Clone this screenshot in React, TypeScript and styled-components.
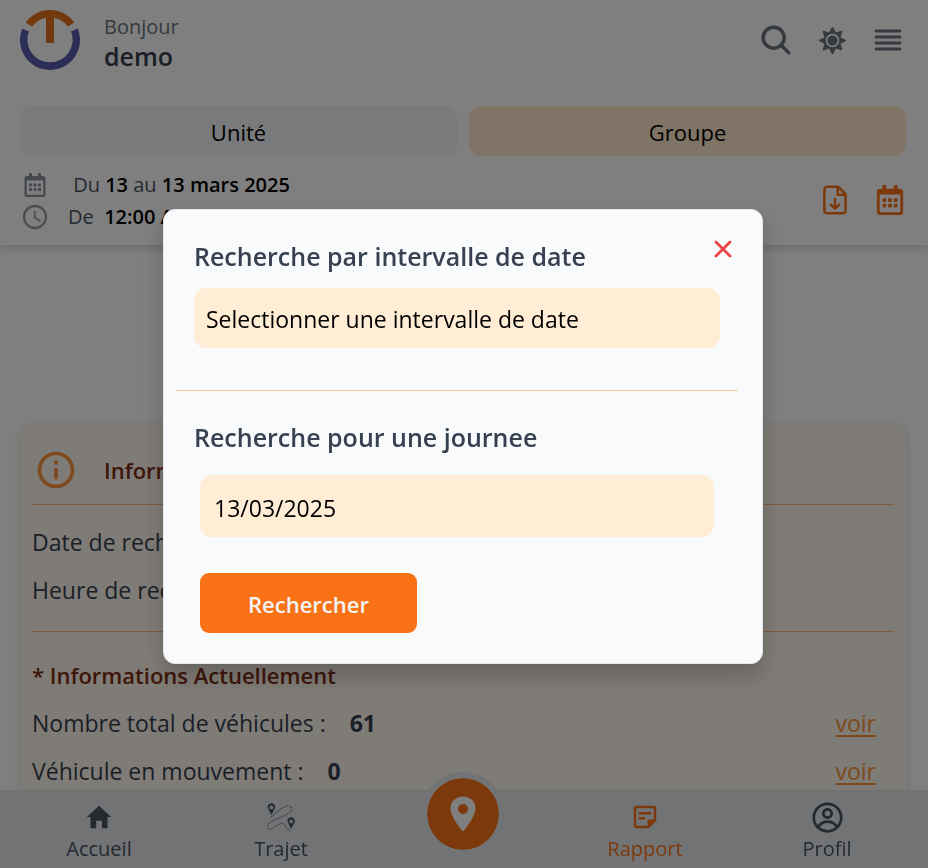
import React from "react";
import styled, { createGlobalStyle, css } from "styled-components";
import { FaRegCalendarAlt, FaSun } from "react-icons/fa";
import { IoLocationSharp, IoSearch } from "react-icons/io5";
import { IoMdHome, IoMdTime } from "react-icons/io";
import { GiPathDistance } from "react-icons/gi";
import { MdInfoOutline, MdOutlineStickyNote2 } from "react-icons/md";
import { CgProfile } from "react-icons/cg";

const GlobalStyle = createGlobalStyle`
  *, *::before, *::after { box-sizing: border-box; }
  html, body { margin: 0; padding: 0; }
  body {
    background: #ffffff;
    color: #374151;
    font-family: "Open Sans", "Noto Sans", sans-serif;
    font-size: 23px;
    line-height: 32px;
  }
  button, input { font: inherit; color: inherit; border: 0; margin: 0; padding: 0; background: none; }
  button { cursor: pointer; }
  h1, h2, p { margin: 0; font-size: inherit; font-weight: inherit; }
  svg { display: block; flex-shrink: 0; }
`;

const Header = styled.header`
  padding: 10px 22px 12px 20px;
  background: #ffffff;
  box-shadow: 0 4px 8px rgba(75, 85, 99, 0.2);
`;

const TopBar = styled.div`
  display: flex;
  align-items: flex-start;
  justify-content: space-between;
  height: 96px;
`;

const Brand = styled.div`
  display: flex;
  gap: 24px;
`;

const Greeting = styled.div`
  padding-top: 2px;
  color: #6b7280;
  font-size: 20px;
  line-height: 30px;
`;

const UserName = styled.h1`
  && { font-size: 25px; font-weight: 600; }
  color: #374151;
  line-height: 28px;
`;

const Actions = styled.div`
  display: flex;
  align-items: center;
  height: 60px;
  gap: 24px;
  padding-right: 2px;
  color: #6b7280;
`;

const IconButton = styled.button`
  display: flex;
  align-items: center;
  justify-content: center;
  width: 32px;
  height: 36px;
`;

const Tabs = styled.div`
  display: grid;
  grid-template-columns: 1fr 1fr;
  gap: 12px;
`;

const Tab = styled.button<{ $active?: boolean }>`
  && {
    height: 50px;
    padding-top: 2px;
    border-radius: 12px;
    background: ${(p) => (p.$active ? "#ffe8ca" : "#f3f4f6")};
    color: #000000;
    font-size: 22px;
  }
`;

const Period = styled.div`
  display: flex;
  align-items: center;
  justify-content: space-between;
  padding-top: 13px;
`;

const PeriodRow = styled.p`
  display: grid;
  grid-template-columns: 30px auto;
  align-items: center;
  gap: 18px;
  color: #4b5563;
  white-space: pre;
  && { font-size: 20px; }

  svg { justify-self: center; color: #8b929d; }
  strong { font-weight: 600; color: #000000; }
`;

const Tools = styled.div`
  display: flex;
  gap: 23px;
  padding-bottom: 2px;
  color: #f97316;
`;

const Card = styled.main`
  margin: 180px 22px 0 20px;
  padding: 12px;
  border-radius: 12px;
  background: #fff7ed;
  box-shadow: 0 2px 8px rgba(75, 85, 99, 0.2);
`;

const CardTitle = styled.h2`
  display: flex;
  align-items: center;
  gap: 26px;
  height: 68px;
  padding: 0 2px 2px;
  border-bottom: 1px solid #fdba84;
  color: #7c2d12;
  && { font-size: 22px; font-weight: 600; }
  svg { color: #fb923c; }
`;

const Summary = styled.div`
  display: grid;
  gap: 16px;
  padding: 21px 0 25px;
  border-bottom: 1px solid #fdba84;
`;

const Stats = styled.section`
  display: grid;
  gap: 16px;
  padding-top: 27px;
`;

const SectionTitle = styled.h2`
  color: #7c2d12;
  && { font-size: 22px; font-weight: 600; }
`;

const Stat = styled.div`
  display: flex;
  align-items: center;
  gap: 24px;
  padding-right: 18px;

  strong { font-weight: 700; }
  a { margin-left: auto; color: #fb923c; text-underline-offset: 3px; }
`;

const Nav = styled.nav`
  position: fixed;
  inset: auto 0 0 0;
  display: grid;
  grid-template-columns: repeat(5, 1fr);
  height: 78px;
  padding: 0 10px 0 8px;
  background: #e5e7eb;
`;

const NavItem = styled.a<{ $active?: boolean }>`
  display: flex;
  flex-direction: column;
  align-items: center;
  padding-top: 10px;
  color: ${(p) => (p.$active ? "#f97316" : "#4b5563")};
  font-size: 20px;
  line-height: 30px;
  text-decoration: none;
`;

const NavIcon = styled.span`
  display: grid;
  place-items: center;
  height: 34px;
`;

const MapLink = styled.a`
  justify-self: center;
  display: grid;
  place-items: center;
  width: 84px;
  height: 84px;
  margin-top: -18px;
  border: 6px solid #e5e7eb;
  border-radius: 50%;
  background: #f97316;
  background-clip: padding-box;
  color: #ffffff;
`;

const Overlay = styled.div`
  position: fixed;
  inset: 0;
  display: flex;
  align-items: center;
  justify-content: center;
  padding: 5px 2px 0 0;
  background: rgba(0, 0, 0, 0.5);
`;

const Dialog = styled.div`
  position: relative;
  width: 600px;
  max-width: 100%;
  padding: 28px 24px 30px 12px;
  border: 1px solid #e5e7eb;
  border-radius: 12px;
  background: #f9fafc;
  box-shadow: 0 12px 24px rgba(0, 0, 0, 0.2);
`;

const Close = styled.button`
  position: absolute;
  top: 23px;
  right: 23px;
  display: grid;
  place-items: center;
  width: 32px;
  height: 32px;
  color: #ef4444;
`;

const Group = styled.div`
  padding: 0 18px;
`;

const headingText = css`
  display: block;
  color: #374151;
  font-size: 25px;
  font-weight: 600;
  line-height: 36px;
`;

const DialogTitle = styled.h2`
  && { ${headingText} }
`;

const FieldLabel = styled.label`
  ${headingText}
`;

const fieldBox = css`
  display: block;
  width: 100%;
  border-radius: 12px;
  background: #ffedd5;
  color: #000000;
  text-align: left;
`;

const RangeButton = styled.button`
  && {
    ${fieldBox}
    height: 60px;
    margin-top: 14px;
    padding: 2px 12px 0;
  }
`;

const Divider = styled.hr`
  margin: 42px 0 28px;
  border: 0;
  border-top: 1px solid #fdc590;
`;

const DayForm = styled.form`
  padding: 20px 6px 0;
`;

const DateInput = styled.input`
  && {
    ${fieldBox}
    height: 62px;
    padding: 3px 14px 0;
  }
`;

const Submit = styled.button`
  && {
    height: 60px;
    margin-top: 36px;
    padding: 2px 48px 0;
    border-radius: 9px;
    background: #f97316;
    color: #f3f4f6;
    font-size: 22px;
    font-weight: 600;
  }
`;

const Logo = () => (
  <svg width="60" height="60" viewBox="-30 -30 60 60" aria-hidden="true">
    <path
      fill="#e4731d"
      d="M-24.3-17.6A30 30 0 0 1 24.3-17.6L18-13.4A22.4 22.4 0 0 0 4-22V3H-4V-22A22.4 22.4 0 0 0-18-13.4Z"
    />
    <path
      fill="#5a5cae"
      d="M-27.7-11.5A30 30 0 1 0 27.7-11.5L21-8.6A22.6 22.6 0 1 1-21-8.6Z"
    />
  </svg>
);

const MenuIcon = () => (
  <svg width="28" height="28" viewBox="0 0 28 28" aria-hidden="true">
    <path
      d="M2 5h24M2 11h24M2 17h24M2 23h24"
      stroke="currentColor"
      strokeWidth="2.8"
      strokeLinecap="round"
    />
  </svg>
);

const CloseIcon = () => (
  <svg width="18" height="18" viewBox="0 0 18 18" aria-hidden="true">
    <path
      d="M2 2l14 14M16 2L2 16"
      stroke="currentColor"
      strokeWidth="2.8"
      strokeLinecap="round"
    />
  </svg>
);

const FileDownIcon = () => (
  <svg width="24" height="30" viewBox="0 0 24 30" fill="none" aria-hidden="true">
    <path
      d="M4 1.8H15.3L22.5 9V25.6A2.6 2.6 0 0 1 19.9 28.2H4A2.6 2.6 0 0 1 1.4 25.6V4.4A2.6 2.6 0 0 1 4 1.8ZM14.6 2V9.7H22.3M12 14V23.2M7.8 19.6L12 23.6L16.2 19.6"
      stroke="currentColor"
      strokeWidth="2.5"
      strokeLinecap="round"
      strokeLinejoin="round"
    />
  </svg>
);

const stats = [
  { label: "Nombre total de véhicules :", value: 61 },
  { label: "Véhicule en mouvement :", value: 0 },
];

export default function App() {
  return (
    <>
      <GlobalStyle />
      <Header>
        <TopBar>
          <Brand>
            <Logo />
            <Greeting>
              <p>Bonjour</p>
              <UserName>demo</UserName>
            </Greeting>
          </Brand>
          <Actions>
            <IconButton aria-label="Rechercher un véhicule"><IoSearch size={36} /></IconButton>
            <IconButton aria-label="Thème"><FaSun size={27} /></IconButton>
            <IconButton aria-label="Menu"><MenuIcon /></IconButton>
          </Actions>
        </TopBar>
        <Tabs>
          <Tab type="button">Unité</Tab>
          <Tab type="button" $active>Groupe</Tab>
        </Tabs>
        <Period>
          <div>
            <PeriodRow>
              <FaRegCalendarAlt size={24} />
              <span> Du <strong>13</strong> au <strong>13 mars 2025</strong></span>
            </PeriodRow>
            <PeriodRow>
              <IoMdTime size={30} />
              <span>De  <strong>12:00 AM</strong> à <strong>11:59 PM</strong></span>
            </PeriodRow>
          </div>
          <Tools>
            <IconButton aria-label="Télécharger"><FileDownIcon /></IconButton>
            <IconButton aria-label="Choisir une date"><FaRegCalendarAlt size={30} /></IconButton>
          </Tools>
        </Period>
      </Header>

      <Card>
        <CardTitle>
          <MdInfoOutline size={44} />
          Informations
        </CardTitle>
        <Summary>
          <p>Date de recherche :</p>
          <p>Heure de recherche :</p>
        </Summary>
        <Stats>
          <SectionTitle>* Informations Actuellement</SectionTitle>
          {stats.map((s) => (
            <Stat key={s.label}>
              <span>{s.label}</span>
              <strong>{s.value}</strong>
              <a href="#details">voir</a>
            </Stat>
          ))}
        </Stats>
      </Card>

      <Nav>
        <NavItem href="#accueil">
          <NavIcon><IoMdHome size={30} /></NavIcon>
          Accueil
        </NavItem>
        <NavItem href="#trajet">
          <NavIcon><GiPathDistance size={30} /></NavIcon>
          Trajet
        </NavItem>
        <MapLink href="#carte" aria-label="Carte">
          <IoLocationSharp size={40} />
        </MapLink>
        <NavItem href="#rapport" $active>
          <NavIcon><MdOutlineStickyNote2 size={30} /></NavIcon>
          Rapport
        </NavItem>
        <NavItem href="#profil">
          <NavIcon><CgProfile size={33} /></NavIcon>
          Profil
        </NavItem>
      </Nav>

      <Overlay>
        <Dialog role="dialog" aria-modal="true" aria-labelledby="range-title">
          <Close type="button" aria-label="Fermer"><CloseIcon /></Close>
          <Group>
            <DialogTitle id="range-title">Recherche par intervalle de date</DialogTitle>
            <RangeButton type="button">Selectionner une intervalle de date</RangeButton>
          </Group>
          <Divider />
          <Group>
            <FieldLabel htmlFor="day">Recherche pour une journee</FieldLabel>
            <DayForm onSubmit={(e) => e.preventDefault()}>
              <DateInput id="day" type="text" defaultValue="13/03/2025" />
              <Submit type="submit">Rechercher</Submit>
            </DayForm>
          </Group>
        </Dialog>
      </Overlay>
    </>
  );
}
